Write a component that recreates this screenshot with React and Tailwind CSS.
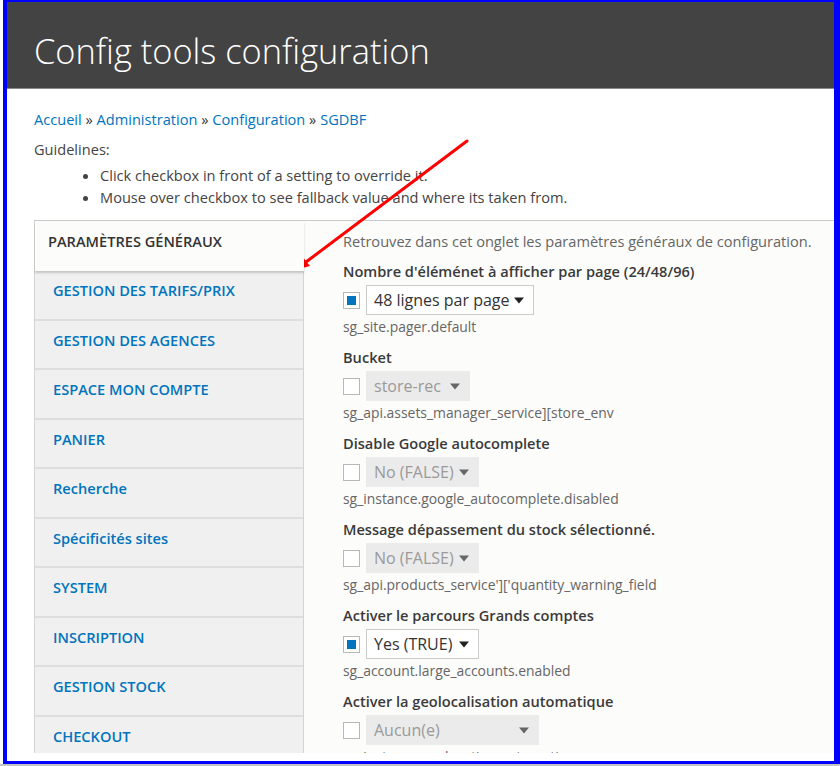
import React from "react";

const tabs = [
  "GESTION DES TARIFS/PRIX",
  "GESTION DES AGENCES",
  "ESPACE MON COMPTE",
  "PANIER",
  "Recherche",
  "Spécificités sites",
  "SYSTEM",
  "INSCRIPTION",
  "GESTION STOCK",
  "CHECKOUT",
];

const groups = [
  { label: "Nombre d'éléménet à afficher par page (24/48/96)", checked: true, value: "48 lignes par page", w: "w-[168px]", desc: "sg_site.pager.default" },
  { label: "Bucket", checked: false, value: "store-rec", w: "w-[104px]", desc: "sg_api.assets_manager_service][store_env" },
  { label: "Disable Google autocomplete", checked: false, value: "No (FALSE)", w: "w-[113px]", desc: "sg_instance.google_autocomplete.disabled" },
  { label: "Message dépassement du stock sélectionné.", checked: false, value: "No (FALSE)", w: "w-[113px]", desc: "sg_api.products_service']['quantity_warning_field" },
  { label: "Activer le parcours Grands comptes", checked: true, value: "Yes (TRUE)", w: "w-[113px]", desc: "sg_account.large_accounts.enabled" },
  { label: "Activer la geolocalisation automatique", checked: false, value: "Aucun(e)", w: "w-[173px]", desc: "sg_instance.geolocation.automatic" },
];

function Caret({ color }) {
  return (
    <svg width="10" height="7" viewBox="0 0 10 7" className="shrink-0">
      <path d="M0 0.5 L10 0.5 L5 6.5 Z" fill={color} />
    </svg>
  );
}

function Group({ g }) {
  return (
    <div className="mb-[11px]">
      <div className="text-[14.6px] leading-[20px] font-semibold text-[#3a3a3a] whitespace-nowrap">{g.label}</div>
      <div className="mt-[4px] flex items-center gap-[6px]">
        <div className="w-[17px] h-[17px] border border-[#b8b8b8] bg-white flex items-center justify-center">
          {g.checked && <div className="w-[9px] h-[9px] bg-[#0074bd]" />}
        </div>
        {g.checked ? (
          <div className={`${g.w} h-[30px] border border-[#cccccc] bg-white flex items-center justify-between pl-[7px] pr-[9px] text-[16px] text-[#333] whitespace-nowrap`}>
            <span>{g.value}</span>
            <Caret color="#222" />
          </div>
        ) : (
          <div className={`${g.w} h-[30px] bg-[#ebebeb] flex items-center justify-between pl-[8px] pr-[10px] text-[16px] text-[#9a9a9a] whitespace-nowrap`}>
            <span>{g.value}</span>
            <Caret color="#666" />
          </div>
        )}
      </div>
      <div className="mt-[3px] text-[13.9px] leading-[18px] text-[#666] whitespace-nowrap">{g.desc}</div>
    </div>
  );
}

export default function App() {
  return (
    <div className="relative w-[840px] h-[766px] bg-white overflow-hidden font-['Open_Sans',sans-serif]">
      <div className="ml-[3px] w-[837px] h-[764px] border-l-4 border-t-2 border-r-[6px] border-b-[3px] border-[#0000ff] overflow-hidden flex flex-col">
        <div className="h-[87px] shrink-0 bg-[#434343] border-b border-[#8a8a8a] pl-[27px] pt-[25px]">
          <h1 className="text-[34.4px] leading-[47px] font-light text-white whitespace-nowrap">Config tools configuration</h1>
        </div>
        <div className="pl-[27px] flex-1 flex flex-col min-h-0">
          <div className="mt-[20px] text-[14.6px] leading-[20px] text-[#333] whitespace-nowrap">
            <span className="text-[#0074bd]">Accueil</span> » <span className="text-[#0074bd]">Administration</span> » <span className="text-[#0074bd]">Configuration</span> » <span className="text-[#0074bd]">SGDBF</span>
          </div>
          <div className="mt-[10px] text-[14.6px] leading-[20px] text-[#444]">Guidelines:</div>
          <ul className="mt-[5px] list-disc pl-[66px] text-[14.6px] leading-[22px] text-[#444] whitespace-nowrap">
            <li>Click checkbox in front of a setting to override it.</li>
            <li>Mouse over checkbox to see fallback value and where its taken from.</li>
          </ul>
          <div className="mt-[12px] h-[533px] shrink-0 flex border-t border-[#cccccc] overflow-hidden">
            <div className="w-[270px] shrink-0 bg-[#f0f0f0] border-l border-r border-[#d4d4d4]">
              <div className="relative z-10 h-[50px] -mr-px bg-[#fcfcfa] shadow-[0_2px_2px_rgba(0,0,0,0.18)] pl-[13px] pt-[10px] text-[14.6px] leading-[20px] font-semibold text-[#333] whitespace-nowrap">
                PARAMÈTRES GÉNÉRAUX
              </div>
              {tabs.map((t) => (
                <div key={t} className="h-[49.5px] border-b-2 border-[#dedede] pl-[18px] pt-[9px] text-[14.6px] leading-[20px] font-semibold text-[#0074bd] whitespace-nowrap">
                  {t}
                </div>
              ))}
            </div>
            <div className="flex-1 bg-[#fcfcfa] pl-[39px] pt-[10px]">
              <div className="text-[14.6px] leading-[20px] text-[#666] whitespace-nowrap">Retrouvez dans cet onglet les paramètres généraux de configuration.</div>
              <div className="mt-[10px]">
                {groups.map((g, i) => (
                  <Group key={i} g={g} />
                ))}
              </div>
            </div>
          </div>
        </div>
      </div>
      <div className="h-[2px] bg-[#c4c4c4]" />
      <svg className="absolute left-0 top-0 pointer-events-none" width="840" height="766" viewBox="0 0 840 766">
        <line x1="467" y1="141" x2="306" y2="262" stroke="#ff0000" strokeWidth="3" strokeLinecap="round" />
        <polygon points="295,270 310,266 302,256" fill="#ff0000" />
      </svg>
    </div>
  );
}
